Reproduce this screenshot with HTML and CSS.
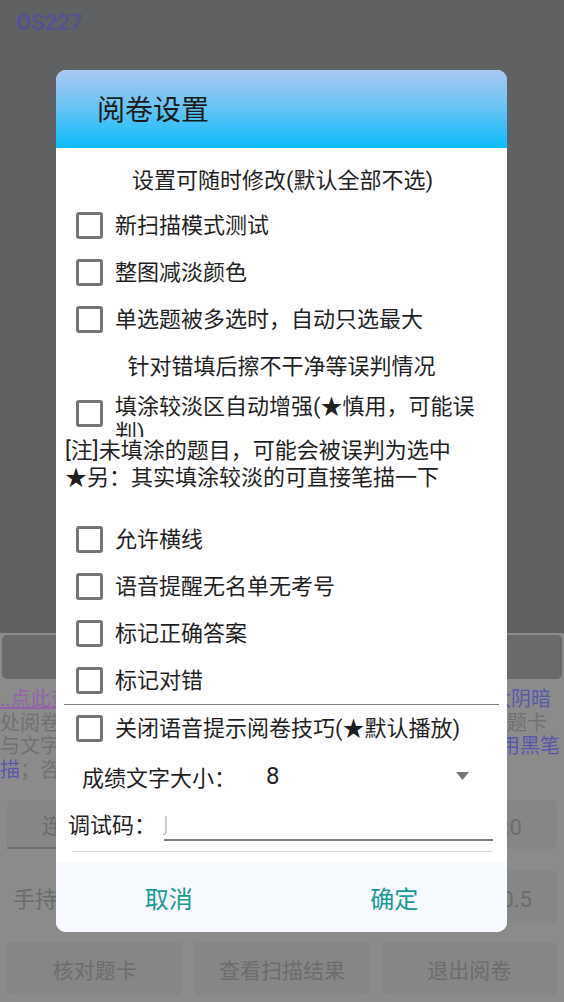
FILE: index.html
```html
<!DOCTYPE html>
<html lang="zh-CN">
<head>
<meta charset="utf-8">
<title>阅卷设置</title>
<link rel="stylesheet" href="styles.css">
</head>
<body>
<div class="app">
  <div class="top-area"><span class="os-label">OS227</span></div>
  <div class="lower">
    <div class="dark-bar"></div>
    <div class="info">
      <div class="info-line"><span class="link">..点此查看使用说明</span><span class="blue r1">光线太阴暗</span></div>
      <div class="info-line"><span class="gray">处阅卷前请先核对</span><span class="gray r2">题卡</span></div>
      <div class="info-line"><span class="gray">与文字清晰</span><span class="blue r3">请用黑笔</span></div>
      <div class="info-line"><span><span class="blue">描</span><span class="gray">；咨询请联系客服</span></span></div>
    </div>
    <div class="btn-row">
      <div class="bg-btn underlined left-text">连续扫描</div>
      <div class="bg-btn ghost"></div>
      <div class="bg-btn right-text">阈值:0</div>
    </div>
    <div class="btn-row row-two">
      <div class="plain-text">手持模式</div>
      <div class="bg-btn ghost"></div>
      <div class="bg-btn right-text r-half">比例0.5</div>
    </div>
    <div class="btn-row row-three">
      <div class="bg-btn center-text">核对题卡</div>
      <div class="bg-btn center-text">查看扫描结果</div>
      <div class="bg-btn center-text">退出阅卷</div>
    </div>
  </div>
</div>

<div class="dialog">
  <div class="dialog-header">阅卷设置</div>
  <div class="dialog-body">
    <div class="subtitle">设置可随时修改(默认全部不选)</div>
    <div class="check-row"><span class="box"></span><span class="label">新扫描模式测试</span></div>
    <div class="check-row"><span class="box"></span><span class="label">整图减淡颜色</span></div>
    <div class="check-row"><span class="box"></span><span class="label">单选题被多选时，自动只选最大</span></div>
    <div class="subtitle sub2">针对错填后擦不干净等误判情况</div>
    <div class="check-row multi"><span class="box"></span><span class="label">填涂较淡区自动增强(★慎用，可能误判)</span></div>
    <div class="notes">
      <div class="note">[注]未填涂的题目，可能会被误判为选中</div>
      <div class="note">★另：其实填涂较淡的可直接笔描一下</div>
    </div>
    <div class="check-row"><span class="box"></span><span class="label">允许横线</span></div>
    <div class="check-row"><span class="box"></span><span class="label">语音提醒无名单无考号</span></div>
    <div class="check-row"><span class="box"></span><span class="label">标记正确答案</span></div>
    <div class="check-row"><span class="box"></span><span class="label">标记对错</span></div>
    <div class="divider"></div>
    <div class="check-row"><span class="box"></span><span class="label">关闭语音提示阅卷技巧(★默认播放)</span></div>
    <div class="size-row">
      <span class="size-label">成绩文字大小：</span>
      <span class="size-value">8</span>
      <svg class="caret" width="13" height="8" viewBox="0 0 13 8"><path d="M0 0 H13 L6.5 8 Z" fill="#777"/></svg>
    </div>
    <div class="debug-row">
      <span class="debug-label">调试码：</span>
      <div class="debug-input"><svg class="cursor" width="6" height="19" viewBox="0 0 6 19"><path d="M4 0 V16 Q4 18 2 18 H1" fill="none" stroke="#b5b5b5" stroke-width="1.4"/></svg></div>
    </div>
    <div class="light-line"></div>
  </div>
  <div class="dialog-actions">
    <div class="action">取消</div>
    <div class="action">确定</div>
  </div>
</div>
</body>
</html>
```

FILE: styles.css
```css
* { box-sizing: border-box; }

html, body {
  margin: 0;
  padding: 0;
}

body {
  width: 564px;
  height: 1002px;
  overflow: hidden;
  position: relative;
  font-family: Roboto, "Noto Sans CJK SC", sans-serif;
  background: #8b8b8b;
}

.app {
  width: 564px;
  height: 1002px;
  display: flex;
  flex-direction: column;
}

.top-area {
  height: 633px;
  background: #606163;
  padding: 9px 0 0 16px;
}

.os-label {
  font-family: Roboto, sans-serif;
  font-weight: 700;
  font-size: 22px;
  line-height: 28px;
  color: #51519a;
  opacity: 0.8;
}

.lower {
  flex: 1;
  background: #8b8b8b;
  display: flex;
  flex-direction: column;
}

.dark-bar {
  margin: 2px 2px 0 2px;
  height: 44px;
  background: #6a6a6a;
  border-radius: 5px;
}

.info {
  margin-top: 9px;
  font-size: 20px;
  line-height: 23.5px;
}

.info-line {
  display: flex;
  justify-content: space-between;
  white-space: nowrap;
  overflow: hidden;
}

.link {
  color: #9462ab;
  text-decoration: underline;
}

.blue { color: #5858aa; }
.gray { color: #717171; }

.r1 { margin-right: 13px; }
.r2 { margin-right: 17px; }
.r3 { margin-right: 4px; }

.btn-row {
  margin-top: 18px;
  padding: 0 7px;
  display: grid;
  grid-template-columns: 1fr 1fr 1fr;
  column-gap: 12px;
  height: 49px;
}

.row-two {
  margin-top: 21px;
  height: 53px;
}

.row-three {
  margin-top: 19px;
  height: 53px;
}

.bg-btn {
  background: #868686;
  border-radius: 5px;
  font-size: 21px;
  color: #6c6c6c;
  display: flex;
  align-items: center;
  white-space: nowrap;
  overflow: hidden;
}

.bg-btn.ghost { background: #868686; }

.underlined {
  border-bottom: 2px solid #707070;
  border-radius: 5px 5px 0 0;
}

.left-text { padding-left: 35px; }

.right-text {
  justify-content: flex-end;
  padding-right: 35px;
  font-size: 22px;
}

.r-half { padding-right: 25px; }

.center-text { justify-content: center; }

.plain-text {
  font-size: 22px;
  color: #6c6c6c;
  padding-left: 6px;
  display: flex;
  align-items: center;
  white-space: nowrap;
}

/* Dialog */
.dialog {
  position: absolute;
  left: 56px;
  top: 70px;
  width: 451px;
  height: 862px;
  background: #ffffff;
  border-radius: 10px;
  overflow: hidden;
  display: flex;
  flex-direction: column;
  color: #1f1f1f;
}

.dialog-header {
  height: 78px;
  flex: none;
  background: linear-gradient(to bottom, #a9c8f1 0%, #6cc4f5 45%, #0cbcfd 100%);
  padding-left: 41px;
  display: flex;
  align-items: center;
  font-size: 28px;
  color: #1b1b1b;
  padding-bottom: 2px;
}

.dialog-body {
  flex: 1;
  padding-top: 12px;
  display: flex;
  flex-direction: column;
  font-size: 22px;
}

.subtitle {
  height: 42px;
  line-height: 42px;
  text-align: center;
  font-size: 22px;
  padding-left: 2px;
}

.sub2 {
  height: 47px;
  line-height: 47px;
  padding-left: 0;
}

.check-row {
  height: 47px;
  flex: none;
  display: flex;
  align-items: center;
  padding-left: 20px;
  padding-right: 17px;
  overflow: hidden;
}

.box {
  width: 27px;
  height: 27px;
  flex: none;
  border: 3px solid #757575;
  border-radius: 3px;
  margin-right: 12px;
}

.label {
  flex: 1;
  min-width: 0;
  line-height: 26px;
}

.check-row.multi {
  align-items: flex-start;
}

.check-row.multi .box {
  margin-top: 10px;
}

.check-row.multi .label {
  padding-top: 4px;
}

.notes {
  padding-left: 9px;
  line-height: 27px;
  margin-bottom: 25px;
}

.divider {
  height: 1px;
  margin: 0 8px;
  background: #7c7c7c;
  flex: none;
}

.size-row {
  height: 47px;
  flex: none;
  display: flex;
  align-items: center;
  padding-left: 26px;
}

.size-label { white-space: nowrap; }

.size-value {
  font-family: Roboto, sans-serif;
  font-size: 24px;
  margin-left: 30px;
  color: #222;
}

.caret {
  margin-left: auto;
  margin-right: 38px;
}

.debug-row {
  height: 52px;
  flex: none;
  display: flex;
  align-items: flex-start;
  padding-top: 14px;
  padding-left: 12px;
  padding-right: 14px;
}

.debug-label {
  line-height: 26px;
  white-space: nowrap;
}

.debug-input {
  flex: 1;
  height: 28px;
  margin-left: 8px;
  border-bottom: 2px solid #7a7a7a;
  position: relative;
}

.cursor {
  position: absolute;
  left: -2px;
  top: 3px;
}

.light-line {
  height: 1px;
  margin: 0 15px 0 16px;
  background: #dcdcdc;
  flex: none;
}

.dialog-actions {
  height: 70px;
  flex: none;
  background: #f6f9fd;
  display: flex;
}

.action {
  flex: 1;
  display: flex;
  align-items: center;
  justify-content: center;
  font-size: 24px;
  color: #179a93;
}
```
